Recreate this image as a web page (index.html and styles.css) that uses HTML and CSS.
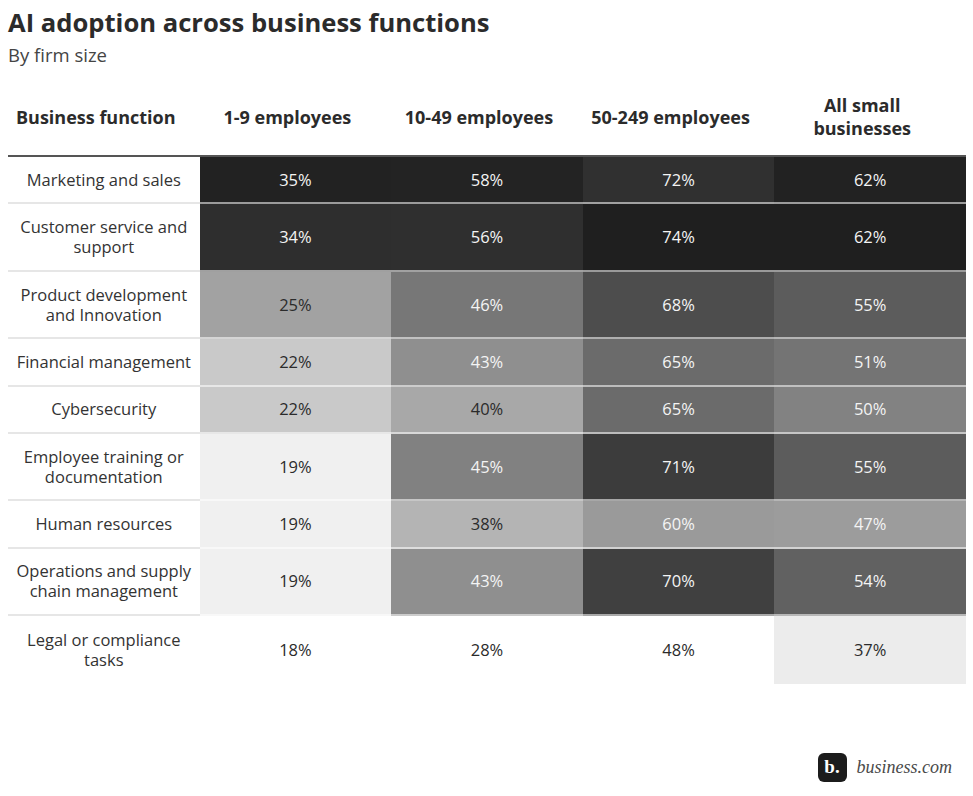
FILE: index.html
```html
<!DOCTYPE html>
<html lang="en">
<head>
<meta charset="utf-8">
<title>AI adoption across business functions</title>
<link rel="stylesheet" href="styles.css">
</head>
<body>
<main class="page">
  <header class="intro">
    <h1 class="title">AI adoption across business functions</h1>
    <p class="subtitle">By firm size</p>
  </header>

  <div class="table">
    <div class="th th-first">Business function</div>
    <div class="th">1-9 employees</div>
    <div class="th">10-49 employees</div>
    <div class="th">50-249 employees</div>
    <div class="th">All small<br>businesses</div>

    <div class="label">Marketing and sales</div>
    <div class="cell on-dark" style="--c:#222222">35%</div>
    <div class="cell on-dark" style="--c:#232323">58%</div>
    <div class="cell on-dark" style="--c:#303030">72%</div>
    <div class="cell on-dark" style="--c:#222222">62%</div>

    <div class="label two">Customer service and<br>support</div>
    <div class="cell two on-dark" style="--c:#2e2e2e">34%</div>
    <div class="cell two on-dark" style="--c:#2f2f2f">56%</div>
    <div class="cell two on-dark" style="--c:#1f1f1f">74%</div>
    <div class="cell two on-dark" style="--c:#1f1f1f">62%</div>

    <div class="label two">Product development<br>and Innovation</div>
    <div class="cell two" style="--c:#a2a2a2">25%</div>
    <div class="cell two on-dark" style="--c:#777777">46%</div>
    <div class="cell two on-dark" style="--c:#4d4d4d">68%</div>
    <div class="cell two on-dark" style="--c:#5c5c5c">55%</div>

    <div class="label">Financial management</div>
    <div class="cell" style="--c:#c9c9c9">22%</div>
    <div class="cell on-dark" style="--c:#8f8f8f">43%</div>
    <div class="cell on-dark" style="--c:#6b6b6b">65%</div>
    <div class="cell on-dark" style="--c:#747474">51%</div>

    <div class="label">Cybersecurity</div>
    <div class="cell" style="--c:#c9c9c9">22%</div>
    <div class="cell" style="--c:#a8a8a8">40%</div>
    <div class="cell on-dark" style="--c:#6b6b6b">65%</div>
    <div class="cell on-dark" style="--c:#828282">50%</div>

    <div class="label two">Employee training or<br>documentation</div>
    <div class="cell two" style="--c:#f0f0f0">19%</div>
    <div class="cell two on-dark" style="--c:#818181">45%</div>
    <div class="cell two on-dark" style="--c:#3c3c3c">71%</div>
    <div class="cell two on-dark" style="--c:#5c5c5c">55%</div>

    <div class="label">Human resources</div>
    <div class="cell" style="--c:#f0f0f0">19%</div>
    <div class="cell" style="--c:#b4b4b4">38%</div>
    <div class="cell on-dark" style="--c:#9a9a9a">60%</div>
    <div class="cell on-dark" style="--c:#9c9c9c">47%</div>

    <div class="label two">Operations and supply<br>chain management</div>
    <div class="cell two" style="--c:#f0f0f0">19%</div>
    <div class="cell two on-dark" style="--c:#8f8f8f">43%</div>
    <div class="cell two on-dark" style="--c:#404040">70%</div>
    <div class="cell two on-dark" style="--c:#616161">54%</div>

    <div class="label two last">Legal or compliance<br>tasks</div>
    <div class="cell two last" style="--c:#ffffff">18%</div>
    <div class="cell two last" style="--c:#ffffff">28%</div>
    <div class="cell two last" style="--c:#ffffff">48%</div>
    <div class="cell two last" style="--c:#ececec">37%</div>
  </div>

  <footer class="brand">
    <span class="brand-mark">b.</span>
    <span class="brand-name">business.com</span>
  </footer>
</main>
</body>
</html>
```

FILE: styles.css
```css
* { box-sizing: border-box; }

html, body {
  margin: 0;
  padding: 0;
  background: #ffffff;
}

body {
  font-family: "Open Sans", "Noto Sans", "Liberation Sans", sans-serif;
  color: #2b2b2b;
}

.page {
  width: 973px;
  height: 796px;
  padding: 6px 7px 0 8px;
  display: flex;
  flex-direction: column;
}

.title {
  margin: 0;
  font-size: 25.6px;
  line-height: 34px;
  font-weight: 700;
  color: #2b2b2b;
}

.subtitle {
  margin: 3px 0 0;
  font-size: 18.5px;
  line-height: 24px;
  color: #444444;
}

.table {
  margin-top: 22px;
  display: grid;
  grid-template-columns: repeat(5, 1fr);
}

.th {
  height: 68px;
  display: flex;
  align-items: center;
  justify-content: center;
  text-align: center;
  padding: 0 16px 10px 0;
  font-size: 18px;
  line-height: 23px;
  font-weight: 700;
  color: #2b2b2b;
  border-bottom: 2px solid #555555;
}

.label,
.cell {
  display: flex;
  align-items: center;
  justify-content: center;
  text-align: center;
  font-size: 16.5px;
  line-height: 20px;
  height: 47.2px;
  padding: 0 4px;
}

.label.two,
.cell.two {
  height: 67.6px;
}

.label {
  color: #333333;
  border-bottom: 2px solid #e6e6e6;
}

.cell {
  background: var(--c);
  color: #2b2b2b;
  border-bottom: 2px solid rgba(255, 255, 255, 0.55);
}

.cell.on-dark {
  color: #f4f4f4;
}

.label.last,
.cell.last {
  border-bottom: none;
}

.brand {
  margin-top: auto;
  margin-bottom: 14px;
  align-self: flex-end;
  display: flex;
  align-items: center;
  gap: 10px;
  padding-right: 14px;
}

.brand-mark {
  width: 29px;
  height: 29px;
  border-radius: 6px;
  background: #1c1c1c;
  color: #ffffff;
  display: flex;
  align-items: center;
  justify-content: center;
  font-family: "Liberation Serif", "DejaVu Serif", serif;
  font-weight: 700;
  font-size: 19px;
  padding-bottom: 2px;
}

.brand-name {
  font-family: "Liberation Serif", "DejaVu Serif", serif;
  font-style: italic;
  font-size: 18px;
  color: #4a4a4a;
}
```
